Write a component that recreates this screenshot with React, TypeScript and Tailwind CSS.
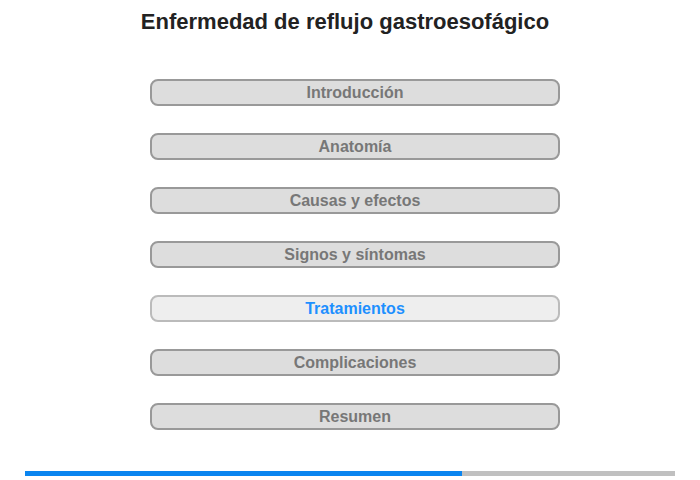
const sections = [
  "Introducción",
  "Anatomía",
  "Causas y efectos",
  "Signos y síntomas",
  "Tratamientos",
  "Complicaciones",
  "Resumen",
];

const activeIndex = 4;

export default function App() {
  return (
    <div className="flex h-[480px] w-[700px] flex-col items-center bg-white font-['Liberation_Sans',Arial,sans-serif]">
      <h1 className="mr-[10px] pt-[9px] text-[22px] font-bold leading-[26px] text-[#222]">
        Enfermedad de reflujo gastroesofágico
      </h1>

      <div className="ml-[10px] mt-[44px] flex flex-col gap-[27px]">
        {sections.map((name, i) =>
          i === activeIndex ? (
            <button
              key={name}
              className="flex h-[27px] w-[410px] items-center justify-center rounded-[8px] border-2 border-[#bbb] bg-[#eee] text-[16px] font-bold text-[#1e90ff]"
            >
              {name}
            </button>
          ) : (
            <button
              key={name}
              className="flex h-[27px] w-[410px] items-center justify-center rounded-[8px] border-2 border-[#999] bg-[#ddd] text-[16px] font-bold text-[#777]"
            >
              {name}
            </button>
          )
        )}
      </div>

      <div className="mt-[41px] flex h-[5px] w-[650px] bg-[#c0c0c0]">
        <div className="h-full w-[437px] bg-[#0a85f0]" />
      </div>
    </div>
  );
}
